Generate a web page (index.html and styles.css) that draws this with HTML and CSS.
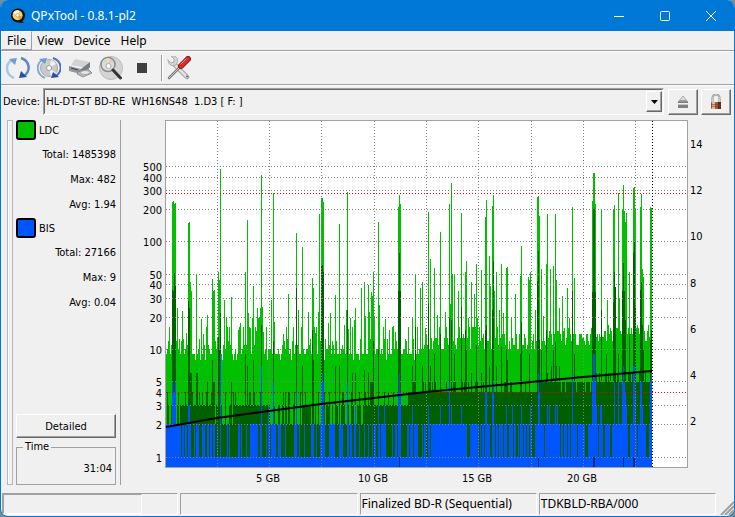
FILE: index.html
```html
<!DOCTYPE html>
<html lang="en">
<head>
    <meta charset="UTF-8">
    <meta name="viewport" content="width=device-width, initial-scale=1.0">
    <title>QPxTool - 0.8.1-pl2</title>
    <link rel="stylesheet" href="styles.css">
    <script src="chart.js" defer></script>
</head>
<body>
<div class="window">
    <header class="titlebar">
        <svg class="app-icon" viewBox="0 0 16 16">
            <circle cx="8" cy="7.5" r="7" fill="#111"/>
            <path d="M9 10l5 5h-4l-3-3z" fill="#111"/>
            <circle cx="7.6" cy="7.3" r="5" fill="#f6d36b"/>
            <path d="M7.6 7.3L3 5A5 5 0 0 1 9 2.500z" fill="#fff3dc"/>
            <path d="M7.6 7.3l4.8 1.500a5 5 0 0 1-3 3.200z" fill="#ef9a2c"/>
            <circle cx="7.6" cy="7.3" r="1.7" fill="#fff" stroke="#999" stroke-width=".7"/>
        </svg>
        <h1 class="title">QPxTool - 0.8.1-pl2</h1>
        <div class="window-buttons">
            <button type="button" aria-label="Minimize"><svg viewBox="0 0 10 10"><path d="M0 5.5h10"/></svg></button>
            <button type="button" aria-label="Maximize"><svg viewBox="0 0 10 10"><rect x=".5" y=".5" width="9" height="9" rx="1"/></svg></button>
            <button type="button" aria-label="Close"><svg viewBox="0 0 10 10"><path d="M0 0l10 10M10 0L0 10"/></svg></button>
        </div>
    </header>

    <nav class="menubar">
        <button type="button" class="active">File</button>
        <button type="button">View</button>
        <button type="button">Device</button>
        <button type="button">Help</button>
    </nav>

    <div class="toolbar">
        <button type="button" aria-label="Rescan devices">
            <svg viewBox="0 0 24 24" fill="none">
                <path d="M8 22C-1 18-1 8 6 4" stroke="#a9c6e8" stroke-width="2.5"/>
                <path d="M3 3l8-1-2 7z" fill="#6c9ad6"/>
                <path d="M15 2c9 3 10 13 3 18" stroke="#5b86c8" stroke-width="2.5"/>
                <path d="M21 21l-8 1 2-7z" fill="#2c4f9c"/>
            </svg>
        </button>
        <button type="button" aria-label="Update media info">
            <svg viewBox="0 0 24 24" fill="none">
                <circle cx="12" cy="12" r="8.5" fill="#c9c9c9" stroke="#aaa"/>
                <path d="M12 12L5 7a8 8 0 0 1 5-3z" fill="#b9dfc6"/>
                <path d="M12 12l7 5a8 8 0 0 1-5 3z" fill="#f2f2f2"/>
                <path d="M12 12l2-8a8 8 0 0 1 5 4z" fill="#eee"/>
                <circle cx="12" cy="12" r="2.5" fill="#fff" stroke="#999"/>
                <path d="M8 22C-1 18-1 8 5 4" stroke="#7fa8dc" stroke-width="2"/>
                <path d="M2 3l8-1-2 6z" fill="#6c9ad6"/>
                <path d="M16 2c9 3 10 13 3 18" stroke="#4a74ba" stroke-width="2"/>
                <path d="M22 21l-8 1 2-6z" fill="#2c4f9c"/>
            </svg>
        </button>
        <button type="button" aria-label="Load or eject">
            <svg viewBox="0 0 24 24">
                <path d="M3 9l4-6 15 3-3 6z" fill="#d0d2d6"/>
                <path d="M1 10l12 3v5L1 15z" fill="#9295a0"/>
                <path d="M13 13l9-7v5l-5 6-4 1z" fill="#777b82"/>
                <path d="M10 16l10-3 4 4-9 4-6-3z" fill="#bbb" stroke="#777" stroke-width=".7"/>
                <ellipse cx="17" cy="16.5" rx="4.5" ry="2" fill="#e6e6e6" stroke="#888" stroke-width=".6"/>
                <path d="M3 12l7 2" stroke="#444"/>
            </svg>
        </button>
        <button type="button" aria-label="Scan disc">
            <svg viewBox="0 0 24 24">
                <circle cx="12" cy="12" r="11.5" fill="#d4d4d4" stroke="#bbb"/>
                <path d="M12 12L2 7a11 11 0 0 1 7-6z" fill="#eee"/>
                <circle cx="9" cy="8.5" r="7" fill="#d9dedb" stroke="#8b8b8b" stroke-width="1.5"/>
                <path d="M9 8.5L4 5a6 6 0 0 1 4-2.5z" fill="#bfe3c8"/>
                <path d="M9 8.5L7 2.7a6 6 0 0 1 4 0z" fill="#efe2a5"/>
                <path d="M9 8.5l2-5.5a6 6 0 0 1 3 2.5z" fill="#ecc3cd"/>
                <circle cx="9.5" cy="10" r="2.5" fill="#fff" stroke="#aaa"/>
                <path d="M14 14l7.5 8" stroke="#333" stroke-width="3" stroke-linecap="round"/>
            </svg>
        </button>
        <button type="button" aria-label="Stop">
            <svg viewBox="0 0 24 24"><rect x="7" y="7" width="10" height="10" fill="#404040"/></svg>
        </button>
        <span class="separator"></span>
        <button type="button" aria-label="Preferences">
            <svg viewBox="0 0 24 24" stroke-linecap="round">
                <path d="M7 8l13 13" stroke="#8a8a8a" stroke-width="4.5"/>
                <path d="M7 8l13 13" stroke="#e2e2e2" stroke-width="3"/>
                <path d="M1 4l3 3 3-1 0-3-3-3c5-1 8 3 6 7-2 5-9 3-9-3z" fill="#d5d5d5" stroke="#999" stroke-width=".7"/>
                <circle cx="20" cy="20.5" r="1" fill="#666"/>
                <path d="M13 11L2 22" stroke="#777" stroke-width="2.5"/>
                <path d="M13 11L2 22" stroke="#ccc"/>
                <path d="M14 10l7-7" stroke="#8f1515" stroke-width="6"/>
                <path d="M14 10l7-7" stroke="#d92c2c" stroke-width="4"/>
                <path d="M14 8l5-5" stroke="#f29090"/>
            </svg>
        </button>
    </div>

    <div class="device-row">
        <label for="device">Device:</label>
        <div class="combo">
            <select id="device">
                <option>HL-DT-ST BD-RE&nbsp; WH16NS48&nbsp; 1.D3 [ F: ]</option>
            </select>
            <span class="combo-arrow"><svg viewBox="0 0 7 4"><path d="M0 0h7L3.5 4z"/></svg></span>
        </div>
        <button type="button" class="raised device-btn" aria-label="Eject">
            <svg viewBox="0 0 16 16">
                <path d="M8 2l5 6H3z" fill="#ddd" stroke="#999" stroke-width=".8"/>
                <path d="M5 6h6l2 2H3z" fill="#999"/>
                <rect x="3" y="8" width="10" height="1" fill="#777"/>
                <rect x="3" y="10" width="10" height="1" fill="#c5c5c5"/>
                <rect x="3" y="11" width="10" height="3" fill="#808080"/>
            </svg>
        </button>
        <button type="button" class="raised device-btn" aria-label="Lock">
            <svg viewBox="0 0 16 16">
                <path d="M4.5 8V4a3.500 3.500 0 0 1 7 0v4" fill="none" stroke="#8a8a80" stroke-width="2"/>
                <path d="M4.5 8V4a3.500 3.500 0 0 1 7 0v4" fill="none" stroke="#ddd" stroke-width=".8"/>
                <rect x="3" y="8" width="10" height="7" rx="1" fill="#9a5a3c"/>
                <rect x="4" y="8" width="3" height="7" fill="#e0b898"/>
                <rect x="10" y="8" width="3" height="7" fill="#5a2a1c"/>
                <path d="M3 10.5h10M3 12.5h10" stroke="#70402c" stroke-width=".6"/>
            </svg>
        </button>
    </div>

    <main class="content">
        <div class="handle"></div>
        <aside class="stats">
            <section class="stat-group">
                <h2><button type="button" class="swatch ldc" aria-label="LDC colour"></button>LDC</h2>
                <p>Total: 1485398</p>
                <p>Max: 482</p>
                <p>Avg: 1.94</p>
            </section>
            <section class="stat-group">
                <h2><button type="button" class="swatch bis" aria-label="BIS colour"></button>BIS</h2>
                <p>Total: 27166</p>
                <p>Max: 9</p>
                <p>Avg: 0.04</p>
            </section>
            <button type="button" class="raised detailed">Detailed</button>
            <fieldset class="time">
                <legend>Time</legend>
                31:04
            </fieldset>
        </aside>
        <svg id="chart" class="chart" viewBox="121 120 611 368" role="img" aria-label="LDC and BIS errors"></svg>
    </main>

    <footer class="statusbar">
        <div class="cell"><div class="progress"></div></div>
        <div class="cell"></div>
        <div class="cell">Finalized BD-R (Sequential)</div>
        <div class="cell">TDKBLD-RBA/000</div>
        <svg class="grip" viewBox="0 0 14 14"><path d="M1 14L14 1M5 14l9-9M9 14l5-5"/></svg>
    </footer>
</div>
</body>
</html>
```

FILE: styles.css
```css
* {
    box-sizing: border-box;
}
body {
    margin: 0;
    background: #7c8c9a;
    color: #000;
    font-family: "DejaVu Sans Condensed", "DejaVu Sans", sans-serif;
    font-size: 11px;
}
button, select {
    font: inherit;
    color: inherit;
    margin: 0;
    padding: 0;
    border: none;
    background: none;
}
svg {
    display: block;
}
.window {
    display: flex;
    flex-direction: column;
    min-height: 100vh;
    background: #f0f0f0;
    border: 1px solid #0078d7;
    border-top: none;
    border-radius: 8px;
    overflow: hidden;
}

/* title bar */
.titlebar {
    display: flex;
    align-items: center;
    height: 31px;
    padding-left: 9px;
    background: #0078d7;
    color: #fff;
    font-family: "Noto Sans", sans-serif;
}
.app-icon {
    width: 16px;
    height: 16px;
}
.title {
    flex: 1;
    margin: 0 0 0 5px;
    font-size: 12px;
    font-weight: normal;
}
.window-buttons {
    display: flex;
}
.window-buttons button {
    display: flex;
    align-items: center;
    justify-content: center;
    width: 46px;
    height: 31px;
}
.window-buttons svg {
    width: 10px;
    height: 10px;
    fill: none;
    stroke: #fff;
}

/* menu and toolbar */
.menubar {
    display: flex;
    height: 20px;
    border-bottom: 1px solid #a0a0a0;
    font-family: "Noto Sans", sans-serif;
    font-size: 12px;
}
.menubar button {
    height: 19px;
    padding: 0 5px;
    line-height: 18px;
}
.menubar .active {
    border: 1px solid #a0a0a0;
    border-top-color: #fff;
    border-left-color: #fff;
}
.toolbar {
    display: flex;
    align-items: center;
    gap: 7px;
    height: 34px;
    padding-left: 5px;
    border-top: 1px solid #fff;
    border-bottom: 1px solid #a0a0a0;
}
.toolbar svg {
    width: 24px;
    height: 24px;
}
.separator {
    width: 2px;
    height: 26px;
    border-left: 1px solid #a0a0a0;
    border-right: 1px solid #fff;
}
.separator + button {
    margin-left: -3px;
}

/* device selector */
.device-row {
    display: flex;
    align-items: center;
    gap: 3px;
    padding: 2px 3px 0 2px;
    border-top: 1px solid #fff;
}
.combo {
    position: relative;
    flex: 1;
    margin-right: 1px;
    height: 27px;
    border: 1px solid #fff;
    border-top-color: #a0a0a0;
    border-left-color: #a0a0a0;
}
.combo select {
    width: 100%;
    height: 25px;
    padding-left: 1px;
    border: 1px solid #f0f0f0;
    border-top-color: #696969;
    border-left-color: #696969;
    appearance: none;
}
.combo-arrow {
    position: absolute;
    top: 2px;
    right: 1px;
    bottom: 2px;
    display: flex;
    align-items: center;
    justify-content: center;
    width: 16px;
    border: 1px solid #696969;
    border-top-color: #fff;
    border-left-color: #fff;
    box-shadow: inset -1px -1px #a0a0a0;
    pointer-events: none;
}
.combo-arrow svg {
    width: 7px;
    height: 4px;
}
.raised {
    display: flex;
    align-items: center;
    justify-content: center;
    border: 1px solid #696969;
    border-top-color: #fff;
    border-left-color: #fff;
    box-shadow: inset -1px -1px #a0a0a0;
}
.device-btn {
    width: 30px;
    height: 26px;
}
.device-btn svg {
    width: 16px;
    height: 16px;
}

/* statistics */
.content {
    display: flex;
    flex: 1;
    padding: 5px 2px 5px 6px;
}
.handle {
    width: 6px;
    margin-bottom: 3px;
    border: 1px solid #b8b8b8;
    box-shadow: inset 1px 1px #fff;
}
.stats {
    display: flex;
    flex-direction: column;
    gap: 3px;
    width: 108px;
    margin-bottom: 3px;
    padding: 0 4px 0 3px;
    border-right: 1px solid #a0a0a0;
    text-align: right;
}
.stat-group {
    display: flex;
    flex-direction: column;
    gap: 5px;
}
.stat-group h2 {
    display: flex;
    align-items: center;
    gap: 3px;
    margin: 0;
    font-size: 11px;
    font-weight: normal;
}
.stat-group p {
    margin: 0;
    line-height: 20px;
}
.swatch {
    width: 20px;
    height: 20px;
    border: 2px solid #000;
    border-radius: 3px;
}
.ldc {
    background: #00c000;
}
.bis {
    background: #0055ff;
}
.detailed {
    height: 24px;
    margin-top: auto;
}
.time {
    margin: 0;
    padding: 8px 3px 7px;
    border: 1px solid #a0a0a0;
    line-height: 16px;
}
.time legend {
    margin-left: 3px;
    margin-right: auto;
    padding: 0 2px;
    line-height: 12px;
}

/* chart */
.chart {
    flex: 1;
    min-width: 0;
    font-size: 11px;
}
.plot-bg {
    fill: #fff;
    stroke: #a0a0a0;
}
.bars {
    shape-rendering: crispEdges;
}
.ldc-max {
    fill: #00c000;
}
.ldc-avg {
    fill: #006000;
}
.bis-max {
    fill: #0055ff;
}
.bis-avg {
    fill: #002a80;
}
.grid {
    stroke: #808080;
    stroke-dasharray: 1 2;
}
.grid.limit {
    stroke: #f00000;
}
.grid.end {
    stroke: #000;
}
.speed {
    fill: none;
    stroke: #000;
    stroke-width: 2;
}
.left {
    text-anchor: end;
}
.bottom {
    text-anchor: middle;
}

/* status bar */
.statusbar {
    display: flex;
    gap: 2px;
    height: 23px;
    padding: 0 0 1px 1px;
    font-family: "Noto Sans", sans-serif;
    font-size: 12px;
}
.cell {
    flex: 1;
    padding-left: 1px;
    border: 1px solid #fff;
    border-top-color: #a0a0a0;
    border-left-color: #a0a0a0;
    line-height: 20px;
    white-space: nowrap;
}
.cell:first-child {
    padding: 0;
}
.progress {
    width: 80%;
    height: 100%;
    border: 1px solid #fff;
    border-top-color: #a0a0a0;
    border-left-color: #a0a0a0;
}
.grip {
    align-self: flex-end;
    width: 14px;
    height: 14px;
    margin-left: 2px;
    fill: none;
    stroke: #a0a0a0;
    stroke-width: 2;
}
```

FILE: chart.js
```js
const svg = document.getElementById('chart');

const LEFT = 166, RIGHT = 687, TOP = 121, BOTTOM = 467, END = 652;

// [first column, top of each following column]
const ldcMax = [
    [172, 202, 201, 204, 203], [177, 308], [182, 311], [186, 333], [188, 223, 222, 282, 291],
    [196, 274], [201, 319], [203, 334], [207, 315], [212, 279, 291, 290], [217, 338, 272, 280, 169],
    [224, 300], [226, 317], [229, 327], [231, 297], [238, 330], [240, 323], [245, 272], [247, 220, 313],
    [250, 328], [252, 318, 286], [255, 327, 331], [257, 308, 318, 318, 308, 175, 307, 332],
    [271, 300], [273, 193, 322], [283, 334], [288, 294], [296, 233], [298, 310], [302, 247],
    [308, 312], [312, 278, 288], [315, 333, 327], [318, 312, 214], [321, 198, 198, 202],
    [328, 323], [330, 313], [335, 295], [339, 224], [344, 325], [346, 310, 192, 329], [350, 318],
    [354, 320, 308], [361, 288], [364, 282, 316], [368, 285, 312], [371, 292, 296, 272, 317],
    [378, 222, 305], [383, 327], [385, 319], [389, 330], [393, 326], [395, 332], [398, 207, 195, 204],
    [412, 318], [415, 275], [420, 288], [422, 282], [425, 328], [428, 212], [430, 259], [434, 268],
    [437, 315], [440, 232], [445, 312], [449, 204, 304, 183, 274], [454, 275], [458, 291],
    [461, 213], [465, 272, 261], [468, 318], [471, 282], [474, 294], [476, 264, 318], [481, 270],
    [485, 217, 200], [489, 256, 286], [492, 206, 195, 291], [496, 272], [499, 310], [501, 264],
    [503, 313], [506, 268, 267], [511, 318], [515, 294], [520, 276, 246], [528, 277, 280, 272],
    [535, 310], [537, 197, 196, 216], [541, 269], [543, 316], [546, 264, 214], [550, 269], [553, 266],
    [555, 214, 280], [559, 308], [562, 296], [567, 288], [569, 318], [572, 207], [574, 278],
    [592, 201, 173, 173, 204], [601, 209], [607, 300], [613, 209, 205, 287], [618, 193, 298],
    [622, 209, 185, 211, 222, 213], [629, 272], [633, 188, 187, 208], [640, 207, 194, 269, 277],
    [650, 207, 208]
];
const ldcAvg = [
    [172, 290, 291, 273, 286], [188, 301, 308, 373, 373], [196, 373, 373], [207, 382],
    [212, 360, 382, 382], [218, 337, 350, 313], [231, 382], [245, 354], [247, 366], [253, 360],
    [261, 325], [273, 341], [296, 288], [302, 366], [312, 330, 360], [321, 265, 265, 272],
    [335, 366], [339, 366], [347, 310], [352, 373], [355, 373], [364, 370], [368, 373],
    [370, 382, 382, 382, 341], [378, 349], [398, 291, 253, 291], [412, 366, 382], [415, 327],
    [422, 366], [428, 303, 382, 366], [434, 354], [440, 334], [449, 318], [451, 320], [454, 354],
    [461, 307], [465, 330, 350], [471, 373], [476, 345], [481, 373], [485, 330, 325], [489, 366],
    [492, 310, 261], [496, 366], [501, 346], [506, 349, 360], [520, 354, 322], [529, 354],
    [537, 281, 251, 340], [541, 350], [546, 330, 373], [551, 366], [553, 350], [555, 342, 366],
    [559, 366], [572, 291], [574, 354], [592, 292, 209, 209, 292], [601, 310], [606, 354],
    [613, 302, 272, 287], [618, 354], [622, 291, 263, 291, 320], [629, 334],
    [633, 253, 242, 308], [640, 290, 282, 325, 350], [650, 340, 330]
];
const bisMax = [
    [172, 382, 392, 392, 382], [188, 405, 405], [220, 354], [261, 366], [268, 405], [273, 382],
    [296, 392], [321, 382, 373, 382], [347, 382], [355, 405], [378, 405], [384, 405],
    [398, 392, 373, 392], [412, 405], [428, 405], [440, 405], [449, 382], [451, 405], [461, 405],
    [485, 392, 392], [492, 392, 382], [506, 405], [512, 405], [521, 405], [530, 405],
    [538, 373, 392], [547, 405], [549, 405], [555, 405], [557, 405], [572, 373],
    [592, 382, 354, 354, 382, 405], [600, 405, 405], [614, 382], [618, 382],
    [622, 382, 366, 382, 392, 405], [633, 366, 366, 392], [640, 382, 382, 405], [650, 382, 373]
];
const bisAvg = [[399, 457], [538, 457], [593, 457, 457], [623, 457], [633, 457, 457]];

// runs of columns where BIS stays at 1: [first column, count]
const bisLow = [
    [181, 1], [184, 1], [187, 1], [191, 3], [195, 1], [199, 3], [205, 2], [209, 1], [212, 1], [215, 2],
    [218, 2], [221, 6], [228, 1], [230, 8], [240, 1], [242, 4], [247, 3], [258, 2], [262, 4],
    [267, 1], [270, 1], [276, 2], [281, 4], [286, 8], [297, 2], [300, 4], [305, 6], [314, 2],
    [317, 3], [325, 4], [335, 4], [343, 4], [349, 1], [352, 2], [356, 3], [360, 4], [365, 3],
    [369, 3], [373, 1], [376, 2], [380, 1], [386, 6], [393, 2], [397, 1], [401, 6], [409, 1],
    [413, 1], [418, 4], [423, 1], [426, 2], [430, 1], [451, 1], [461, 1], [467, 3], [479, 1],
    [481, 1], [484, 1], [490, 2], [495, 1], [498, 1], [503, 1], [507, 2], [513, 1], [516, 2],
    [519, 1], [523, 1], [526, 1], [529, 2], [532, 3], [544, 1], [560, 1], [563, 1], [567, 1],
    [570, 1], [577, 1], [585, 3], [598, 1], [603, 2], [610, 2], [628, 2], [637, 1], [646, 3]
];

let seed = 17;
function random() {
    seed = (seed * 1103515245 + 12345) % 2147483648;
    return seed / 2147483648;
}
function pick(list) {
    return list[Math.floor(random() * list.length)];
}

function baseLdc(x) {
    if (x > 590) return pick([325, 328, 331, 334, 334, 337, 341]);
    if (x > 545) return pick([328, 331, 334, 334, 338, 341, 345]);
    if (x > 425) return pick([327, 334, 338, 341, 345, 349, 349]);
    return pick([327, 339, 341, 345, 349, 349, 354, 354, 354, 360]);
}
function baseAvg(x) {
    if (x > 595) return pick([373, 382, 382, 382, 382]);
    if (x > 538) return pick([382, 382, 382, 382, 382, 392]);
    if (x > 450) return pick([382, 392, 392, 392, 392]);
    if (x > 408) return pick([382, 392, 392, 392, 392, 392]);
    if (x > 362) return pick([392, 405, 405, 405, 405]);
    if ((x > 179 && x < 213) || (x > 232 && x < 270)) return pick([392, 405, 405, 405, 405, 405]);
    return pick([392, 405, 405, 424, 424]);
}
function baseBis(x) {
    return bisLow.some(([start, count]) => x >= start && x < start + count) ? 457 : 424;
}

function add(name, attrs, text) {
    const el = document.createElementNS('http://www.w3.org/2000/svg', name);
    for (const key in attrs) el.setAttribute(key, attrs[key]);
    if (text !== undefined) el.textContent = text;
    svg.appendChild(el);
}

function bars(cls, runs, base) {
    const tops = {};
    for (let x = LEFT; base && x < END; x++) tops[x] = base(x);
    runs.forEach(([start, ...values]) => values.forEach((y, i) => { tops[start + i] = y; }));
    const d = Object.keys(tops).map(x => `M${x} ${BOTTOM}V${tops[x]}h1V${BOTTOM}z`).join('');
    add('path', { class: 'bars ' + cls, d });
}

function line(cls, x1, y1, x2, y2) {
    add('line', { class: 'grid ' + cls, x1, y1, x2, y2 });
}

add('rect', { class: 'plot-bg', x: 165.5, y: 120.5, width: 522, height: 347 });
bars('ldc-max', ldcMax, baseLdc);
bars('ldc-avg', ldcAvg, baseAvg);
bars('bis-max', bisMax, baseBis);
bars('bis-avg', bisAvg);

const levels = {
    500: 166, 400: 177, 300: 190, 200: 209, 100: 241, 50: 274, 40: 284,
    30: 298, 20: 317, 10: 349, 5: 381, 4: 392, 3: 405, 2: 424, 1: 457
};
for (const value in levels) {
    const y = levels[value] + 0.5;
    line(value === '4' ? 'limit' : '', LEFT, y, RIGHT, y);
    add('text', { class: 'left', x: 162, y: levels[value] + 5 }, value);
}
line('limit', LEFT, 193.5, RIGHT, 193.5);

[217, 269, 321, 374, 426, 478, 531, 583, 635].forEach((x, i) => {
    line('', x + 0.5, TOP, x + 0.5, BOTTOM);
    if (i % 2) add('text', { class: 'bottom', x: x - 1, y: 482 }, (i + 1) / 2 * 5 + ' GB');
});
line('end', END + 0.5, TOP, END + 0.5, BOTTOM);

[14, 12, 10, 8, 6, 4, 2].forEach((speed, i) => {
    add('text', { x: 690, y: 148 + Math.round(i * 46.2) }, speed);
});

add('polyline', {
    class: 'speed',
    points: '166,427 217,418 269,411 321,404 374,398 426,392 478,387 531,382 583,377 652,371'
});
```
